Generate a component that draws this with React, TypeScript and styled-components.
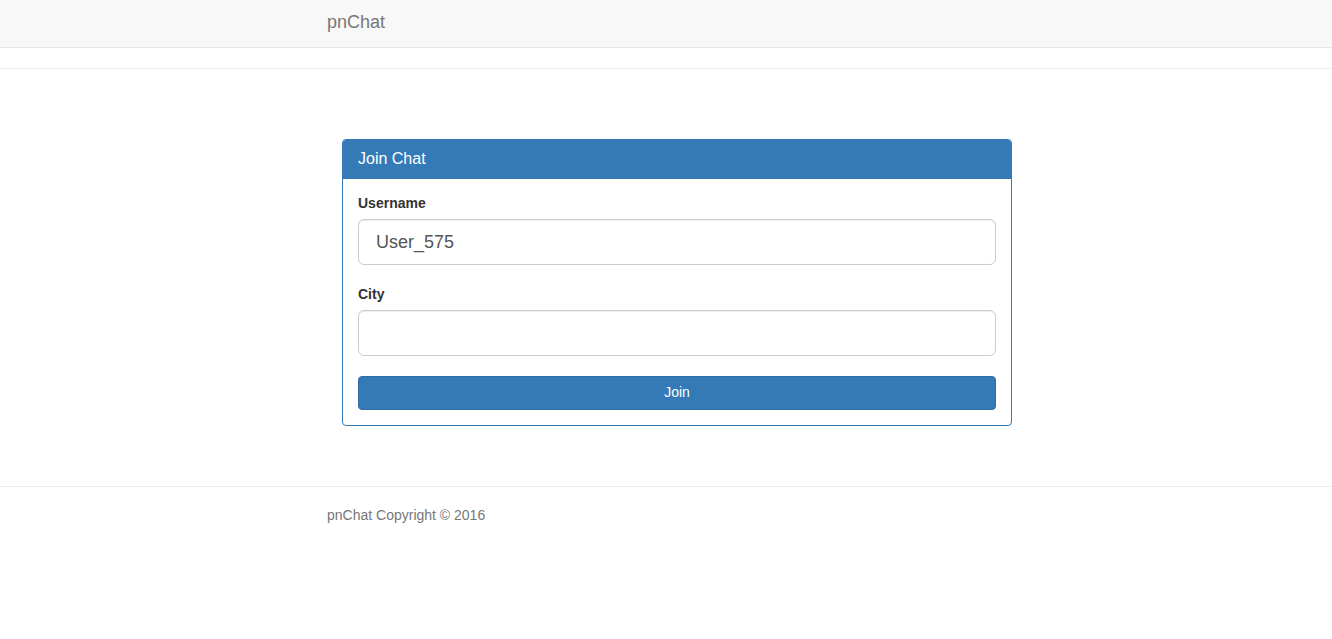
import React from "react";
import styled, { createGlobalStyle } from "styled-components";

const Global = createGlobalStyle`
  html, body { margin: 0; padding: 0; background: #fff; }
  body {
    font-family: "Liberation Sans", Arial, Helvetica, sans-serif;
    font-size: 14px;
    line-height: 1.42857143;
    color: #333;
  }
  * { box-sizing: border-box; }
`;

const Navbar = styled.nav`
  height: 48px;
  background: #f8f8f8;
  border-bottom: 1px solid #e7e7e7;
`;

const Container = styled.div`
  width: 678px;
  margin: 0 auto;
`;

const Brand = styled.a`
  display: block;
  height: 47px;
  padding: 12px 0;
  font-size: 18px;
  line-height: 20px;
  color: #777;
  text-decoration: none;
`;

const Rule = styled.hr<{ $top: number }>`
  margin: ${(p) => p.$top}px 0 0;
  border: 0;
  border-top: 1px solid #eee;
  height: 0;
`;

const Panel = styled.div`
  margin: 70px 0 0 15px;
  width: 670px;
  border: 1px solid #337ab7;
  border-radius: 4px;
  background: #fff;
`;

const PanelHeading = styled.div`
  background: #337ab7;
  color: #fff;
  padding: 10px 15px;
  border-bottom: 1px solid #337ab7;
  border-radius: 3px 3px 0 0;
  font-size: 16px;
  line-height: 17.6px;
  height: 39px;
`;

const PanelBody = styled.form`
  padding: 15px;
  display: flex;
  flex-direction: column;
`;

const FormGroup = styled.div`
  display: flex;
  flex-direction: column;
  margin-bottom: 20px;
`;

const Label = styled.label`
  font-weight: bold;
  font-size: 14px;
  line-height: 18px;
  margin-bottom: 7px;
  color: #333;
`;

const Input = styled.input`
  height: 46px;
  width: 100%;
  padding: 10px 16px 10px 17px;
  font-family: "Liberation Sans", Arial, sans-serif;
  font-size: 18px;
  line-height: 1.3333333;
  color: #555;
  background: #fff;
  border: 1px solid #ccc;
  border-radius: 6px;
  box-shadow: inset 0 1px 1px rgba(0, 0, 0, 0.075);
  outline: none;
`;

const Button = styled.button`
  height: 34px;
  width: 100%;
  font-family: "Liberation Sans", Arial, sans-serif;
  font-size: 14px;
  line-height: 20px;
  color: #fff;
  background: #337ab7;
  border: 1px solid #2e6da4;
  border-radius: 4px;
  padding: 5px 12px 7px;
  cursor: pointer;
`;

const FooterText = styled.p`
  margin: 18px 0 0;
  color: #777;
  font-size: 14px;
  line-height: 20px;
`;

export default function App() {
  return (
    <>
      <Global />
      <Navbar>
        <Container>
          <Brand href="#">pnChat</Brand>
        </Container>
      </Navbar>
      <Rule $top={20} />
      <Container>
        <Panel>
          <PanelHeading>Join Chat</PanelHeading>
          <PanelBody onSubmit={(e) => e.preventDefault()}>
            <FormGroup>
              <Label htmlFor="username">Username</Label>
              <Input id="username" defaultValue="User_575" />
            </FormGroup>
            <FormGroup>
              <Label htmlFor="city">City</Label>
              <Input id="city" defaultValue="" />
            </FormGroup>
            <Button type="submit">Join</Button>
          </PanelBody>
        </Panel>
      </Container>
      <Rule $top={60} />
      <Container>
        <FooterText>pnChat Copyright © 2016</FooterText>
      </Container>
    </>
  );
}
